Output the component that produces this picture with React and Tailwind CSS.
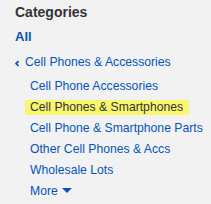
export default function App() {
  const items = [
    "Cell Phone Accessories",
    "Cell Phones & Smartphones",
    "Cell Phone & Smartphone Parts",
    "Other Cell Phones & Accs",
    "Wholesale Lots",
  ];
  return (
    <div className="w-[211px] h-[204px] bg-[#f2f2f2] pl-[15px] pt-[2px]" style={{ fontFamily: '"Liberation Sans", Arial, sans-serif' }}>
      <div className="h-[21px] leading-[21px] text-[14px] font-bold text-[#333]">Categories</div>
      <div className="mt-[3px] h-[21px] leading-[21px] text-[13px] font-bold text-[#0654ba]">All</div>
      <div className="mt-[5px] h-[21px] flex items-center text-[12.2px] text-[#0654ba]">
        <svg width="10" height="21" viewBox="0 0 10 21" className="shrink-0">
          <path d="M3.6 9.2 L1 11.6 L3.6 14" fill="none" stroke="#0654ba" strokeWidth="1.7" />
        </svg>
        <span className="leading-[15px]">Cell Phones &amp; Accessories</span>
      </div>
      <div className="mt-[3px] pl-[15px] flex flex-col">
        {items.map((t) => (
          <div key={t} className="h-[21px] flex items-center">
            {t === "Cell Phones & Smartphones" ? (
              <span className="h-[15px] leading-[15px] text-[12.2px] text-[#333] bg-[#f9f770] -ml-[5px] pl-[5px] pr-[6px] whitespace-nowrap">{t}</span>
            ) : (
              <span className="h-[15px] leading-[15px] text-[12.2px] text-[#0654ba] whitespace-nowrap">{t}</span>
            )}
          </div>
        ))}
        <div className="h-[21px] flex items-center text-[12.2px] text-[#0654ba]">
          <span className="leading-[15px]">More</span>
          <svg width="10" height="5" viewBox="0 0 10 5" className="ml-[4px] -mt-[2px]"><path d="M0 0H10L5 5Z" fill="#0654ba" /></svg>
        </div>
      </div>
    </div>
  );
}
